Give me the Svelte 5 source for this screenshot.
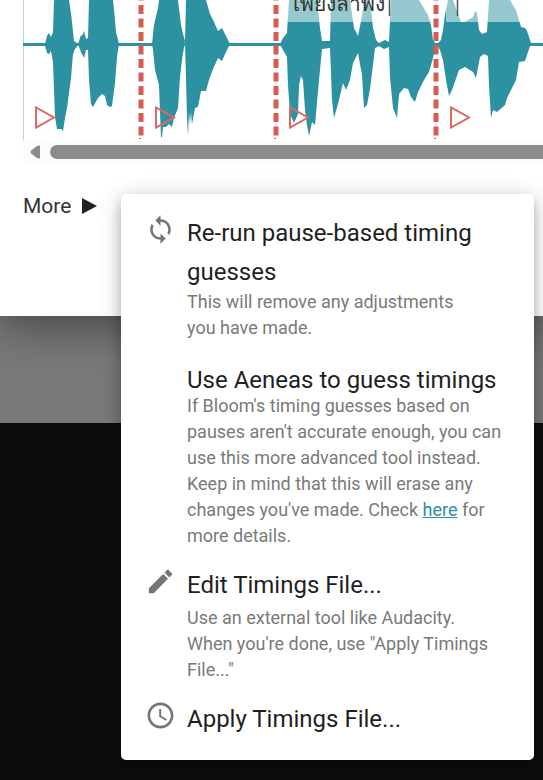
<script>
  const items = [
    { icon: 'sync', title: 'Re-run pause-based timing guesses', text: 'This will remove any adjustments you have made.', narrow: true },
    {
      icon: '',
      compact: true,
      title: 'Use Aeneas to guess timings',
      text: "If Bloom's timing guesses based on pauses aren't accurate enough, you can use this more advanced tool instead. Keep in mind that this will erase any changes you've made. Check ",
      link: 'here',
      after: ' for more details.',
    },
    { icon: 'edit', title: 'Edit Timings File...', text: 'Use an external tool like Audacity. When you\'re done, use "Apply Timings File..."' },
    { icon: 'clock', title: 'Apply Timings File...' },
  ];

  const icons = {
    sync: 'M12 4V1L8 5l4 4V6c3.31 0 6 2.69 6 6 0 1.01-.25 1.97-.7 2.8l1.46 1.46C19.54 15.03 20 13.57 20 12c0-4.42-3.58-8-8-8zm0 14c-3.31 0-6-2.69-6-6 0-1.01.25-1.97.7-2.8L5.24 7.74C4.46 8.97 4 10.43 4 12c0 4.42 3.58 8 8 8v3l4-4-4-4v3z',
    edit: 'M3 17.25V21h3.75L17.81 9.94l-3.75-3.75L3 17.25zM20.71 7.04c.39-.39.39-1.02 0-1.41l-2.34-2.34c-.39-.39-1.02-.39-1.41 0l-1.83 1.83 3.75 3.75 1.83-1.83z',
    clock: 'M11.99 2C6.47 2 2 6.48 2 12s4.47 10 9.99 10C17.52 22 22 17.52 22 12S17.52 2 11.99 2zM12 20c-4.42 0-8-3.58-8-8s3.58-8 8-8 8 3.58 8 8-3.58 8-8 8zm.5-13H11v6l5.25 3.15.75-1.23-4.5-2.67z',
  };

  const bursts = [
    '45,44 47,36 49,33 51,37 53,32 54,0 69,0 71,13 73,32 74,41 77,43 78,45 75,49 73,54 71,78 67,108 65,118 63,131 61,129 57,129 55,117 54,90 53,62 51,51 49,54 47,53 45,46',
    '78,44 81,35 82,36 84,31 86,39 88,38 89,0 113,0 115,20 116,32 119,44 117,57 115,83 112,106 110,107 107,105 105,96 102,94 98,98 93,107 91,104 89,80 88,50 86,50 84,58 81,52',
    '152,44 154,25 158,8 159,0 178,0 181,25 183,34 185,41 186,0 206,0 210,14 214,22 218,31 222,28 226,36 230,44 226,52 222,61 218,58 213,69 209,80 206,91 201,91 198,107 195,108 192,124 191,112 190,124 189,112 188,136 187,118 185,41 182,60 180,77 178,108 174,118 172,127 169,124 166,127 163,127 162,137 161,137 160,112 159,85 155,70 153,50',
    '280,44 283,38 287,33 289,0 317,0 320,28 322,41 330,41 331,0 350,0 354,28 358,36 362,16 364,0 370,0 373,28 376,40 379,43 385,40 389,42 391,0 419,0 428,15 431,25 433,40 436,44 433,58 429,72 424,80 418,92 415,102 411,97 408,89 404,88 399,94 397,118 393,108 390,77 389,47 384,49 379,46 375,48 373,65 370,89 367,105 364,108 362,75 358,53 353,63 350,80 346,90 343,83 338,104 334,118 332,100 330,48 322,49 319,80 315,125 312,122 309,136 307,125 305,110 303,80 301,76 299,85 298,114 294,123 290,114 288,85 287,57 283,50',
    '437,44 441,40 443,30 445,15 448,0 453,0 461,22 465,22 473,17 475,11 477,13 479,30 482,34 487,32 489,0 510,0 516,10 521,27 525,28 527,31 531,43 528,52 525,61 519,62 516,80 507,98 505,105 497,112 493,110 491,118 489,85 488,56 484,54 480,57 476,78 473,72 465,67 459,70 452,90 449,96 446,80 443,60 440,50',
  ];
  const markers = [141, 276, 436];
  const plays = [36, 156, 290, 451];
</script>

<div class="page">
  <section class="dialog">
    <div class="track">
      <svg class="wave" width="520" height="140" viewBox="23 0 520 140" aria-label="Waveform">
        <path d="M23.5 0V140" stroke="#b9dade" />
        <path d="M23 44.5H543" stroke="#2c91a0" stroke-width="3" />
        {#each bursts as points}
          <polygon {points} fill="#2c91a0" />
        {/each}
        <path d="M288 0H434V22H288zM446 0H543V22H446z" fill="#fff" opacity=".5" />
        <text x="293" y="11">เพียงลำพัง</text>
        <path d="M389.5 0V16M457.5 0V16" stroke="#555" stroke-width="1.5" />
        {#each markers as x}
          <path d="M{x} -8.5V137" class="marker" />
          <path d="M{x - 2} 138.5h2" stroke="#d65b50" />
        {/each}
        {#each plays as x}
          <path d="M{x} 107.5V127.5L{x + 18} 117.5Z" class="play" />
        {/each}
      </svg>
      <div class="scrollbar">
        <svg width="11" height="14" viewBox="0 0 11 14"><path d="M10 .5V13.5L7 13L.5 8V6L7 1Z" fill="#8b8b8b" /></svg>
        <span class="thumb"></span>
      </div>
    </div>

    <div class="more-wrap">
      <button class="more">
        More
        <svg width="15" height="16" viewBox="0 0 15 16"><path d="M0 0L15 8L0 16Z" fill="#212121" /></svg>
      </button>
      <ul class="menu">
        {#each items as item}
          <li class:compact={item.compact} class:narrow={item.narrow}>
            <span class="icon">
              {#if item.icon}
                <svg width="31" height="31" viewBox="0 0 24 24"><path d={icons[item.icon]} /></svg>
              {/if}
            </span>
            <div class="body">
              <button class="title">{item.title}</button>
              {#if item.text}
                <p>{item.text}{#if item.link}<a href="#details">{item.link}</a>{item.after}{/if}</p>
              {/if}
            </div>
          </li>
        {/each}
      </ul>
    </div>
  </section>
  <div class="backdrop"></div>
</div>

<style>
  :global(body) {
    margin: 0;
    background: #0d0d0d;
    font-family: Roboto, 'Noto Sans', sans-serif;
  }
  .page {
    min-height: 100vh;
    overflow: hidden;
    background: #0d0d0d;
  }
  .dialog {
    position: relative;
    z-index: 1;
    box-sizing: border-box;
    padding: 0 0 97px 23px;
    background: #fff;
    box-shadow: 0 12px 40px rgba(0, 0, 0, 0.4);
  }
  .backdrop {
    height: 107px;
    background: #797979;
  }
  .track {
    overflow: hidden;
  }
  .wave {
    display: block;
  }
  .wave text {
    font-size: 21px;
    fill: #333;
  }
  .marker {
    stroke: #d65b50;
    stroke-width: 5;
    stroke-dasharray: 9 4.5;
  }
  .play {
    fill: none;
    stroke: #dc6a61;
    stroke-width: 2;
  }
  .scrollbar {
    display: flex;
    align-items: center;
    gap: 9px;
    height: 24px;
    padding-left: 7px;
    background: #fcfcfc;
  }
  .thumb {
    flex: 1;
    height: 14px;
    border-radius: 7px 0 0 7px;
    background: #8b8b8b;
  }
  button {
    margin: 0;
    padding: 0;
    border: 0;
    background: none;
    font: inherit;
    text-align: left;
    cursor: pointer;
  }
  .more-wrap {
    position: relative;
    padding-top: 29px;
  }
  .more {
    display: flex;
    align-items: center;
    gap: 11px;
    font-size: 21px;
    line-height: 26px;
    color: #333;
  }
  .menu {
    position: absolute;
    top: 30px;
    left: 98px;
    right: 9px;
    box-sizing: border-box;
    margin: 0;
    padding: 20px 31px 21px 24px;
    border-radius: 5px;
    background: #fff;
    box-shadow: 0 6px 12px rgba(0, 0, 0, 0.2), 0 4px 24px rgba(0, 0, 0, 0.2);
    list-style: none;
    display: flex;
    flex-direction: column;
    gap: 17px;
  }
  li {
    display: flex;
  }
  .icon {
    flex: 0 0 42px;
  }
  .icon svg {
    display: block;
    fill: #757575;
  }
  .body {
    flex: 1;
    min-width: 0;
  }
  .title {
    display: block;
    font-size: 24px;
    line-height: 39px;
    color: #1f1f1f;
  }
  p {
    margin: 0;
    font-size: 18px;
    line-height: 26px;
    color: #7a7a7a;
  }
  .compact {
    padding-top: 9px;
  }
  .compact .title {
    line-height: 26px;
  }
  .narrow p {
    max-width: 280px;
    margin-top: -3px;
  }
  a {
    color: #2c91a0;
  }
</style>
